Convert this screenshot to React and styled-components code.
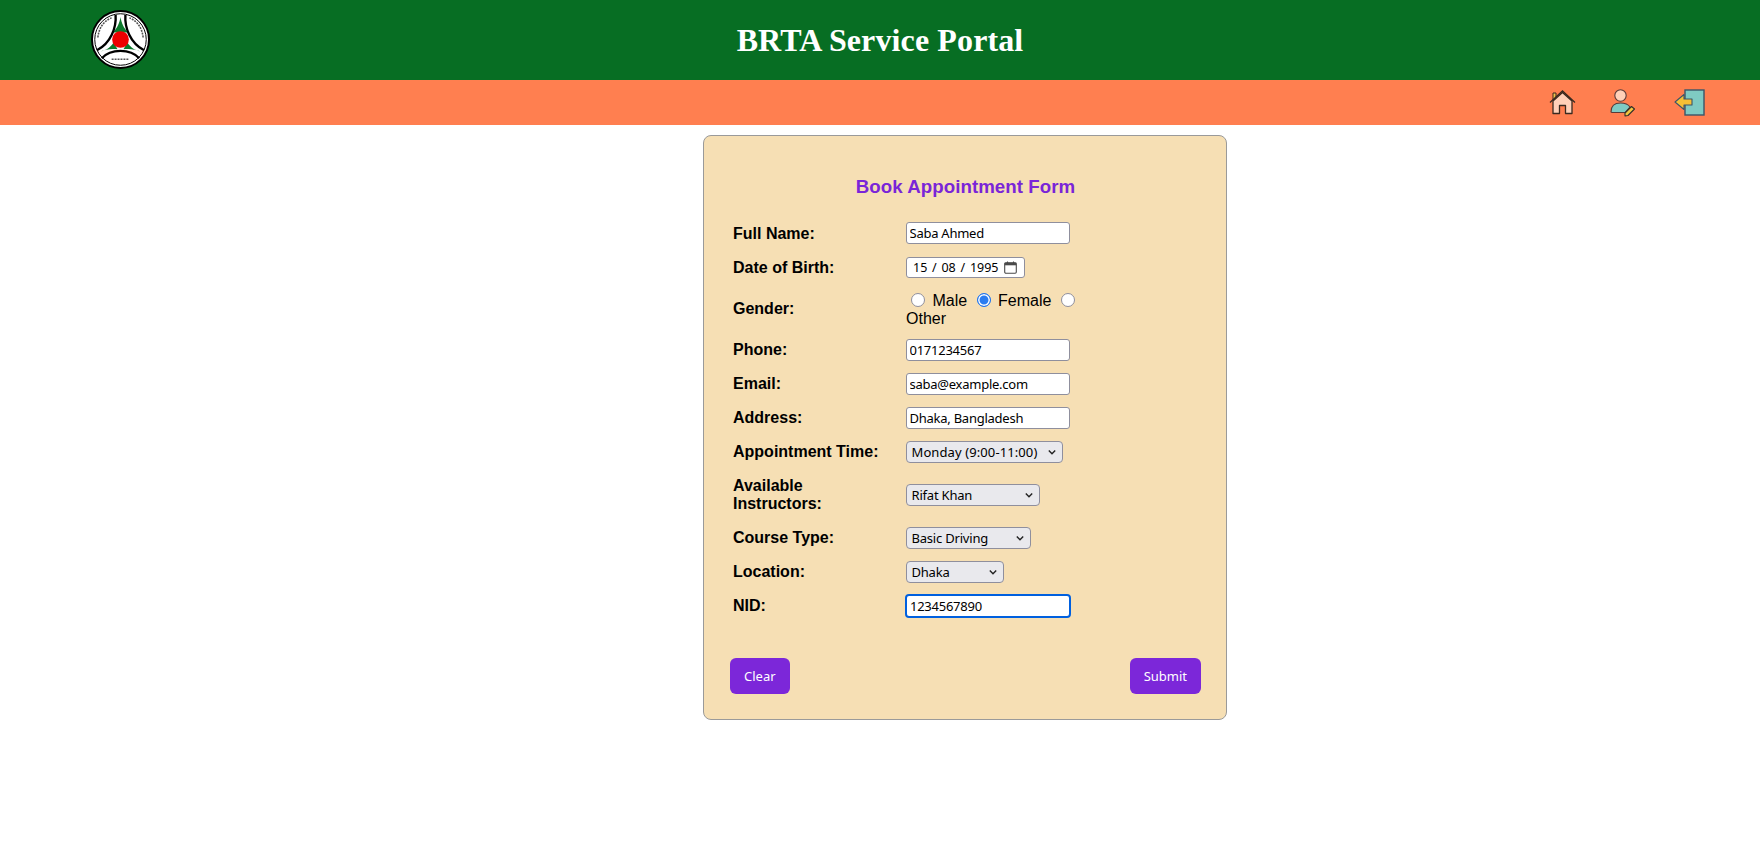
import React from 'react'
import styled, { createGlobalStyle } from 'styled-components'

const GlobalStyle = createGlobalStyle`
  html, body { margin: 0; padding: 0; background: #ffffff; }
  body { font-family: "Liberation Sans", Arial, sans-serif; }
`

const CONTROL_FONT = `"Noto Sans", "DejaVu Sans", sans-serif`

const Header = styled.header`
  display: grid;
  grid-template-columns: 1fr auto 1fr;
  align-items: center;
  height: 80px;
  background: #076e23;
`

const LogoCell = styled.div`
  display: flex;
  padding: 0 0 2px 91px;
`

const Title = styled.h1`
  margin: 0;
  font-family: "Liberation Serif", "Times New Roman", serif;
  font-size: 32px;
  font-weight: 700;
  letter-spacing: 0.12px;
  color: #ffffff;
`

const NavBar = styled.nav`
  display: flex;
  justify-content: flex-end;
  align-items: center;
  height: 45px;
  padding-right: 55px;
  background: #ff7f50;
`

const NavLink = styled.a`
  display: flex;
  margin-left: ${({ $gap }) => $gap}px;
`

const Main = styled.main`
  display: flex;
  justify-content: center;
  padding: 10px 0 0 170px;
`

const Card = styled.form`
  box-sizing: border-box;
  width: 524px;
  height: 585px;
  padding: 39px 25px 26px 26px;
  background: #f6dfb4;
  border: 1px solid #9a9a9a;
  border-radius: 8px;
`

const Heading = styled.h3`
  margin: 0 0 18px;
  font-size: 18.72px;
  line-height: 23px;
  font-weight: 700;
  letter-spacing: 0.05px;
  text-align: center;
  color: #7a25d8;
`

const Row = styled.div`
  display: grid;
  grid-template-columns: 173px 174px;
  align-items: center;
  padding: ${({ $pad = 6 }) => $pad}px 0 ${({ $pad = 6 }) => $pad}px 3px;
`

const Label = styled.label`
  font-size: 16px;
  line-height: 18px;
  font-weight: 700;
  color: #000000;
`

const TextInput = styled.input`
  box-sizing: border-box;
  display: block;
  width: 164px;
  height: 22px;
  margin-bottom: ${({ $drop = 0 }) => $drop}px;
  padding: 0 2.5px;
  font-family: ${CONTROL_FONT};
  font-size: 13px;
  letter-spacing: -0.25px;
  color: #000000;
  background: #ffffff;
  border: 1px solid #8f8f9d;
  border-radius: 3px;
  outline: none;

  ${({ $focused }) => $focused && `
    border: 2px solid #0060df;
    height: 24px;
    width: 166px;
    margin: -1px;
    padding: 0 3px;
    border-radius: 4px;
  `}
`

const DateField = styled.div`
  box-sizing: border-box;
  display: flex;
  align-items: center;
  width: 119px;
  height: 21px;
  padding: 0 7px 0 6px;
  font-family: ${CONTROL_FONT};
  font-size: 12.5px;
  word-spacing: 1.5px;
  color: #000000;
  background: #ffffff;
  border: 1px solid #8f8f9d;
  border-radius: 3px;

  svg { margin-left: auto; }
`

const DateText = styled.span`
  white-space: pre;
`

const GenderOptions = styled.div`
  font-size: 16px;
  line-height: 17.5px;
  color: #000000;
`

const Radio = styled.input`
  appearance: none;
  box-sizing: border-box;
  width: 14px;
  height: 14px;
  margin: 3px 3px 0 5px;
  vertical-align: -1px;
  background: #ffffff;
  border: 1px solid #8f8f9d;
  border-radius: 50%;

  &:checked {
    border: 1.5px solid #1f74ee;
    background: #2a7cf0;
    box-shadow: inset 0 0 0 1.5px #ffffff;
  }
`

const SelectWrap = styled.div`
  position: relative;
  width: ${({ $width }) => $width}px;
  height: 22px;

  svg {
    position: absolute;
    top: 7px;
    right: 7px;
    pointer-events: none;
  }
`

const Select = styled.select`
  appearance: none;
  box-sizing: border-box;
  display: block;
  width: 100%;
  height: 100%;
  padding: 0 4.5px;
  font-family: ${CONTROL_FONT};
  font-size: 13px;
  letter-spacing: ${({ $tracking }) => $tracking}px;
  color: #000000;
  background: #e9e9ed;
  border: 1px solid #8f8f9d;
  border-radius: 4px;
  outline: none;
`

const Actions = styled.div`
  display: flex;
  justify-content: space-between;
  margin-top: 35px;
`

const Button = styled.button`
  box-sizing: border-box;
  height: 36px;
  padding: 0 14px;
  font-family: ${CONTROL_FONT};
  font-size: 13px;
  color: #ffffff;
  background: #7c27d9;
  border: none;
  border-radius: 6px;
`

const Logo = () => (
  <svg width="59" height="59" viewBox="0 0 60 60">
    <circle cx="30" cy="30" r="29" fill="#ffffff" stroke="#000000" strokeWidth="2" />
    <circle cx="30" cy="30" r="26.2" fill="none" stroke="#000000" strokeWidth="1" />
    <path d="M30 7 C31 13 33 18 38 23 L22 23 C27 18 29 13 30 7Z" fill="#0c7a2c" />
    <path d="M10 42 C15 41 20 38 23 33 L27 40 C21 39 15 40 10 42Z" fill="#0c7a2c" />
    <path d="M50 42 C45 41 40 38 37 33 L33 40 C39 39 45 40 50 42Z" fill="#0c7a2c" />
    <path d="M25 5 C26 18 20 34 6 41" fill="none" stroke="#000000" strokeWidth="2.4" />
    <path d="M35 5 C34 18 40 34 54 41" fill="none" stroke="#000000" strokeWidth="2.4" />
    <path d="M11 49 C20 39 40 39 49 49" fill="none" stroke="#000000" strokeWidth="2.4" />
    <path d="M7 28 C8 18 13 11 21 8" fill="none" stroke="#555555" strokeWidth="1.6" strokeDasharray="2 1" />
    <path d="M53 28 C52 18 47 11 39 8" fill="none" stroke="#555555" strokeWidth="1.6" strokeDasharray="2 1" />
    <path d="M21 50 L39 50" fill="none" stroke="#555555" strokeWidth="1.6" strokeDasharray="2 1" />
    <circle cx="30" cy="30" r="8.5" fill="#ee0000" />
  </svg>
)

const HomeIcon = () => (
  <svg width="27" height="25" viewBox="0 0 27 25">
    <path d="M4 10 V3 H7 V7Z" fill="#f0c24a" stroke="#3a2a20" strokeWidth="1" />
    <path d="M4 11 L13.5 2.5 L23 11 V23.5 H16.5 V15.5 H10.5 V23.5 H4Z" fill="#ffd0b8" stroke="#3a2a20" strokeWidth="1.3" strokeLinejoin="round" />
    <path d="M1 12.5 L13.5 1 L26 12.5" fill="none" stroke="#3a2a20" strokeWidth="1.3" />
  </svg>
)

const UserEditIcon = () => (
  <svg width="25" height="28" viewBox="0 0 25 28">
    <circle cx="10.5" cy="6.5" r="5.7" fill="#ffd0b8" stroke="#5a3a38" strokeWidth="1.1" />
    <path d="M1 23 C1 17 4 14 10.5 14 C15 14 18 15 20 18 L15 23.5 H2Z" fill="#7fcac3" stroke="#5a3a38" strokeWidth="1.1" strokeLinejoin="round" />
    <path d="M15 24 L21.5 17.5 L24.5 20 L18 26.5 L15 27Z" fill="#f3c53e" stroke="#33302a" strokeWidth="1.1" strokeLinejoin="round" />
  </svg>
)

const ExitIcon = () => (
  <svg width="31" height="27" viewBox="0 0 31 27">
    <rect x="11" y="1" width="19" height="25" fill="#7fcac3" stroke="#3b5568" strokeWidth="1.4" />
    <path d="M1 13 L10 5.5 V10 H18 V16 H10 V20.5Z" fill="#f6bf34" stroke="#3b5568" strokeWidth="1.1" strokeLinejoin="round" />
  </svg>
)

const CalendarIcon = () => (
  <svg width="13" height="13" viewBox="0 0 13 13">
    <rect x="0.7" y="1.7" width="11.6" height="10.6" rx="1.2" fill="none" stroke="#4a4a4a" strokeWidth="1.1" />
    <rect x="0.7" y="1.7" width="11.6" height="2.6" fill="#4a4a4a" />
    <path d="M3.5 0.5 V2 M9.5 0.5 V2" stroke="#4a4a4a" strokeWidth="1.1" />
  </svg>
)

const Chevron = () => (
  <svg width="8" height="8" viewBox="0 0 8 8">
    <path d="M0.8 2.5 L4 5.7 L7.2 2.5" fill="none" stroke="#222222" strokeWidth="1.4" />
  </svg>
)

const SelectField = ({ width, value, tracking = -0.2, options = [value] }) => (
  <SelectWrap $width={width}>
    <Select defaultValue={value} $tracking={tracking}>
      {options.map((o) => <option key={o}>{o}</option>)}
    </Select>
    <Chevron />
  </SelectWrap>
)

export default function App() {
  return (
    <>
      <GlobalStyle />
      <Header>
        <LogoCell><Logo /></LogoCell>
        <Title>BRTA Service Portal</Title>
      </Header>
      <NavBar>
        <NavLink $gap={0}><HomeIcon /></NavLink>
        <NavLink $gap={34}><UserEditIcon /></NavLink>
        <NavLink $gap={39}><ExitIcon /></NavLink>
      </NavBar>
      <Main>
        <Card onSubmit={(e) => e.preventDefault()}>
          <Heading>Book Appointment Form</Heading>
          <Row>
            <Label>Full Name:</Label>
            <TextInput $drop={1} defaultValue="Saba Ahmed" />
          </Row>
          <Row>
            <Label>Date of Birth:</Label>
            <DateField>
              <DateText>15 / 08 / 1995</DateText>
              <CalendarIcon />
            </DateField>
          </Row>
          <Row>
            <Label>Gender:</Label>
            <GenderOptions>
              <Radio type="radio" name="gender" /> Male
              {' '}<Radio type="radio" name="gender" defaultChecked /> Female
              {' '}<Radio type="radio" name="gender" /> Other
            </GenderOptions>
          </Row>
          <Row>
            <Label>Phone:</Label>
            <TextInput defaultValue="0171234567" />
          </Row>
          <Row>
            <Label>Email:</Label>
            <TextInput defaultValue="saba@example.com" />
          </Row>
          <Row>
            <Label>Address:</Label>
            <TextInput defaultValue="Dhaka, Bangladesh" />
          </Row>
          <Row>
            <Label>Appointment Time:</Label>
            <SelectField width={157} tracking={0.1} value="Monday (9:00-11:00)" />
          </Row>
          <Row $pad={8}>
            <Label>Available<br />Instructors:</Label>
            <SelectField width={134} value="Rifat Khan" />
          </Row>
          <Row>
            <Label>Course Type:</Label>
            <SelectField width={125} value="Basic Driving" />
          </Row>
          <Row>
            <Label>Location:</Label>
            <SelectField width={98} value="Dhaka" />
          </Row>
          <Row>
            <Label>NID:</Label>
            <TextInput $focused defaultValue="1234567890" />
          </Row>
          <Actions>
            <Button type="button">Clear</Button>
            <Button type="submit">Submit</Button>
          </Actions>
        </Card>
      </Main>
    </>
  )
}
